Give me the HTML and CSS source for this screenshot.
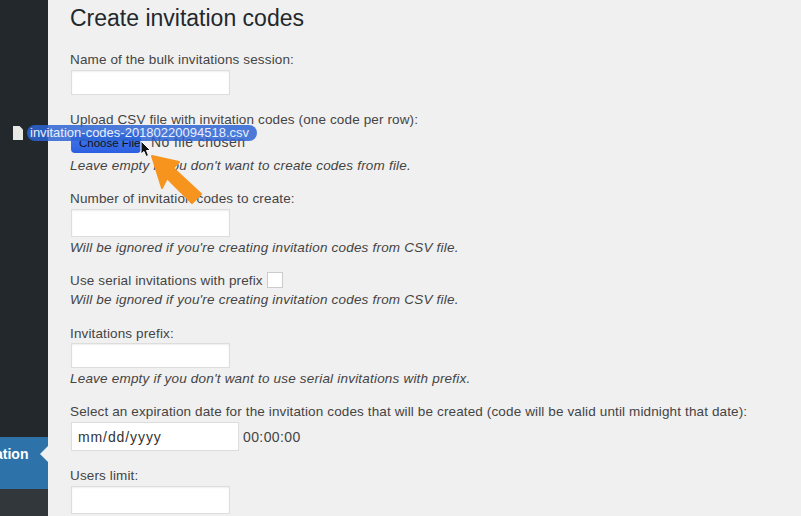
FILE: index.html
```html
<!DOCTYPE html>
<html lang="en">
<head>
  <meta charset="UTF-8">
  <meta name="viewport" content="width=device-width, initial-scale=1.0">
  <title>Create invitation codes</title>
  <link rel="stylesheet" href="styles.css">
</head>
<body>

  <aside class="sidebar">
    <div class="menu-e">e</div>
    <div class="menu-active">ation</div>
    <div class="menu-below"></div>
  </aside>

  <main class="main">
    <h1>Create invitation codes</h1>

    <div class="field field-name">
      <label>Name of the bulk invitations session:</label>
      <input type="text" class="text-input">
    </div>

    <div class="field field-file">
      <label>Upload CSV file with invitation codes (one code per row):</label>
      <div class="file-row">
        <span class="file-btn">Choose File</span>
        <span class="file-none">No file chosen</span>
      </div>
      <p class="hint">Leave empty if you don't want to create codes from file.</p>
    </div>

    <div class="field field-number">
      <label>Number of invitation codes to create:</label>
      <input type="text" class="text-input">
      <p class="hint">Will be ignored if you're creating invitation codes from CSV file.</p>
    </div>

    <div class="field field-serial">
      <div class="check-row">
        <label>Use serial invitations with prefix</label>
        <span class="check"></span>
      </div>
      <p class="hint">Will be ignored if you're creating invitation codes from CSV file.</p>
    </div>

    <div class="field field-prefix">
      <label>Invitations prefix:</label>
      <input type="text" class="text-input">
      <p class="hint">Leave empty if you don't want to use serial invitations with prefix.</p>
    </div>

    <div class="field field-date">
      <label>Select an expiration date for the invitation codes that will be created (code will be valid until midnight that date):</label>
      <div class="date-row">
        <span class="date-input">mm/dd/yyyy</span>
        <span class="time">00:00:00</span>
      </div>
    </div>

    <div class="field field-limit">
      <label>Users limit:</label>
      <input type="text" class="text-input">
    </div>
  </main>

  <!-- file being dragged, sits over the form -->
  <div class="drag">
    <svg class="drag-icon" width="10" height="14" viewBox="0 0 10 14">
      <path d="M0 0H6.5L10 3.5V14H0Z" fill="#e8e8e4"/>
    </svg>
    <span class="drag-name">invitation-codes-20180220094518.csv</span>
  </div>

  <svg class="arrow" width="60" height="58" viewBox="0 0 60 58">
    <path d="M5 6L32 12L26 18L54 44L45 53L20 28L15 38Z" fill="#f7941e" stroke="#f7941e" stroke-width="2" stroke-linejoin="round"/>
  </svg>

  <svg class="cursor" width="12" height="18" viewBox="0 0 12 18">
    <path d="M1 1V14L4 11.5L6 16.5L8.5 15.5L6.5 10.5H10.5Z" fill="#111" stroke="#fff" stroke-width="1"/>
  </svg>

</body>
</html>
```

FILE: styles.css
```css
* {
  margin: 0;
  padding: 0;
  box-sizing: border-box;
  font-family: "Liberation Sans", Arial, sans-serif;
}

html, body {
  height: 516px;
  overflow: hidden;
}

body {
  background: #f0f0f0;
  color: #444;
  font-size: 13.5px;
  display: flex;
}

.sidebar {
  width: 48px;
  height: 516px;
  flex-shrink: 0;
  background: #23282d;
  color: #fff;
  overflow: hidden;
  display: flex;
  flex-direction: column;
  position: relative;
}

.menu-e {
  margin-top: 264px;
  margin-left: -8px;
  font-size: 14px;
  line-height: 18px;
}

.menu-active {
  margin-top: 155px;
  height: 52px;
  background: #2e72aa;
  font-size: 14px;
  font-weight: bold;
  line-height: 34px;
  text-indent: -5px;
  position: relative;
}

.menu-active::after {
  content: "";
  position: absolute;
  right: 0;
  top: 9px;
  border: 8px solid transparent;
  border-left: 0;
  border-right-color: #f0f0f0;
}

.menu-below {
  flex: 1;
  background: #32373c;
}

.main {
  flex: 1;
  padding-left: 22px;
}

h1 {
  font-size: 23px;
  font-weight: 400;
  line-height: 29px;
  color: #23282d;
  margin-top: 4px;
}

label {
  display: block;
  height: 18px;
  padding-top: 1px;
  line-height: 18px;
  letter-spacing: 0.13px;
}

.text-input {
  display: block;
  width: 159px;
  height: 26px;
  margin-left: 1px;
  margin-top: 2px;
  background: #fff;
  border: 1px solid #ddd;
  box-shadow: inset 0 1px 2px rgba(0, 0, 0, .07);
}

.hint {
  height: 18px;
  padding-top: 1px;
  font-style: italic;
  line-height: 18px;
  letter-spacing: 0.2px;
}

.field-name {
  margin-top: 17px;
}

.field-name .text-input {
  height: 25px;
}

.field-file {
  margin-top: 15px;
}

.field-file .hint {
  margin-top: 3px;
}

.file-row {
  display: flex;
  align-items: center;
  height: 20px;
  margin-top: 5px;
  margin-left: 1px;
}

.file-btn {
  width: 70px;
  height: 20px;
  padding-left: 8px;
  background: linear-gradient(#4a7cf0, #2a5fe0);
  border-radius: 4px;
  color: #111;
  font-size: 11.5px;
  line-height: 20px;
  white-space: nowrap;
  overflow: hidden;
}

.file-none {
  margin-left: 10px;
  font-size: 14px;
  line-height: 18px;
  margin-bottom: 2px;
  letter-spacing: 0.4px;
}

.field-number {
  margin-top: 15px;
}

.field-number .text-input {
  height: 28px;
}

.field-number .hint {
  margin-top: 1px;
}

.field-serial {
  margin-top: 15px;
}

.field-serial .hint {
  margin-top: 1px;
}

.check-row {
  display: flex;
  align-items: center;
}

.check {
  width: 16px;
  height: 16px;
  margin-left: 4px;
  background: #fff;
  border: 1px solid #ccc;
}

.field-prefix {
  margin-top: 16px;
}

.field-prefix .text-input {
  height: 25px;
  margin-top: 1px;
}

.field-prefix .hint {
  margin-top: 1px;
}

.field-date {
  margin-top: 15px;
}

.date-row {
  display: flex;
  align-items: center;
  gap: 4px;
  margin-top: 2px;
  margin-left: 1px;
}

.date-input {
  width: 168px;
  height: 29px;
  padding-left: 6px;
  background: #fff;
  border: 1px solid #ddd;
  line-height: 29px;
  font-size: 14px;
  color: #333;
  letter-spacing: 0.9px;
}

.time {
  font-size: 14px;
  letter-spacing: 0.4px;
}

.field-limit {
  margin-top: 15px;
}

.field-limit .text-input {
  height: 28px;
}

.drag {
  position: absolute;
  left: 13px;
  top: 125px;
  display: flex;
  align-items: center;
  gap: 4px;
}

.drag-name {
  height: 16px;
  padding: 0 8px 0 3px;
  background: rgba(45, 100, 212, .85);
  border-radius: 8px;
  color: #e8eefc;
  font-size: 13px;
  line-height: 16px;
  white-space: nowrap;
}

.arrow {
  position: absolute;
  left: 147px;
  top: 150px;
}

.cursor {
  position: absolute;
  left: 140px;
  top: 140px;
}
```
